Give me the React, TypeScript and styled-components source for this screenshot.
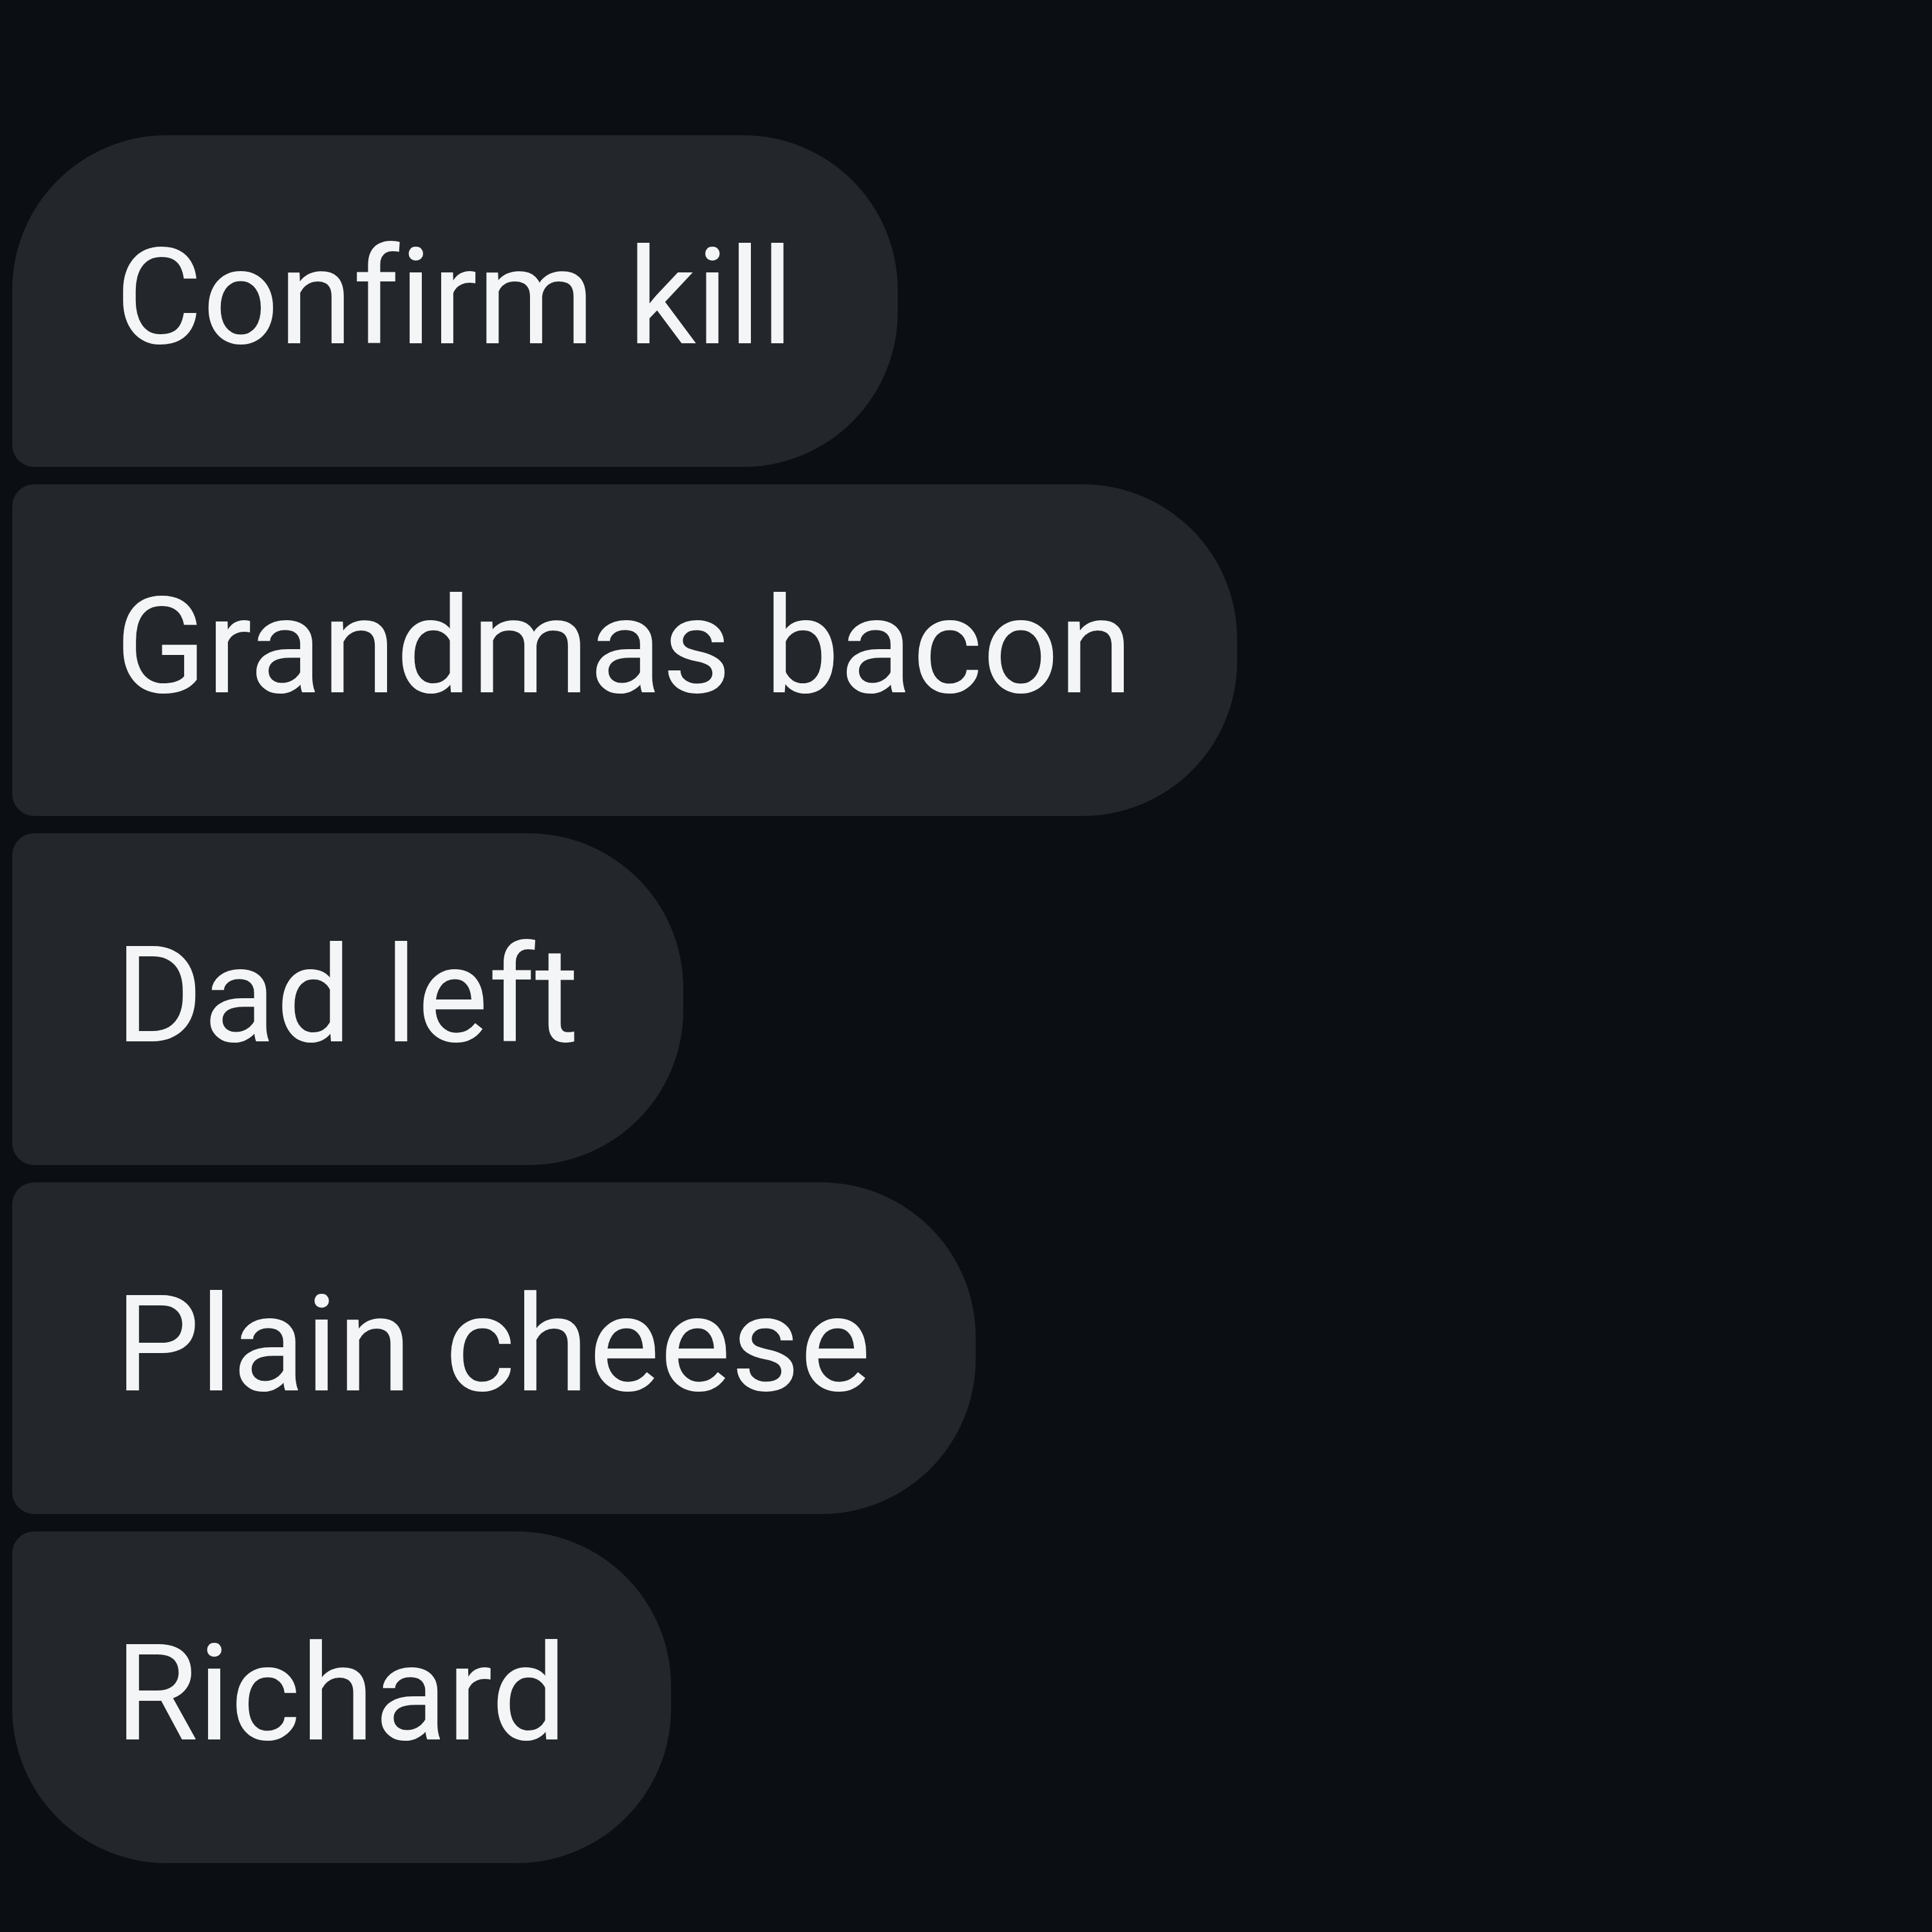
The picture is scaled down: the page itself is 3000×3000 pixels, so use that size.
import * as React from "react";
import styled, { createGlobalStyle } from "styled-components";

const GlobalStyle = createGlobalStyle`
  html, body {
    margin: 0;
    padding: 0;
    background: #0b0f13;
  }
`;

const SThread = styled.div`
  width: 3000px;
  height: 3000px;
  box-sizing: border-box;
  padding: 210px 0 0 19px;
  background: #0b0f13;
  display: flex;
  flex-direction: column;
  align-items: flex-start;
  gap: 27px;
  overflow: hidden;
`;

type Place = "first" | "middle" | "last";

const bigR = "240px";
const smallR = "34px";

const SBubble = styled.div<{ place: Place }>`
  box-sizing: border-box;
  height: 515px;
  padding: 131px 162px 140px 160px;
  background: #23272b;
  color: #f4f5f6;
  font-family: Roboto, "Liberation Sans", sans-serif;
  font-size: 208px;
  line-height: 1.172;
  font-variant-ligatures: none;
  white-space: nowrap;
  border-radius: ${(p) =>
    p.place === "first"
      ? `${bigR} ${bigR} ${bigR} ${smallR}`
      : p.place === "last"
      ? `${smallR} ${bigR} ${bigR} ${bigR}`
      : `${smallR} ${bigR} ${bigR} ${smallR}`};
`;

const messages = [
  "Confirm kill",
  "Grandmas bacon",
  "Dad left",
  "Plain cheese",
  "Richard",
];

export default function App() {
  return (
    <>
      <GlobalStyle />
      <SThread>
        {messages.map((text, i) => (
          <SBubble
            key={text}
            place={
              i === 0 ? "first" : i === messages.length - 1 ? "last" : "middle"
            }
          >
            {text}
          </SBubble>
        ))}
      </SThread>
    </>
  );
}
